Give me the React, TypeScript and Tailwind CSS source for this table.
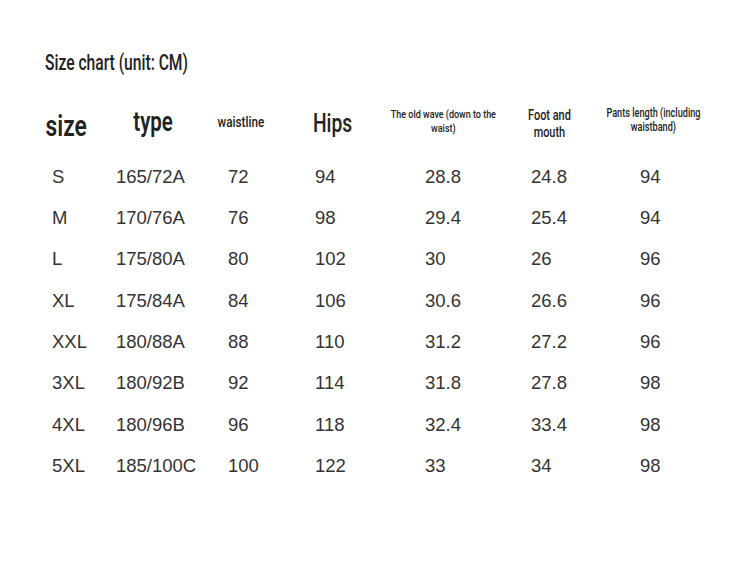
import React from 'react';

const rows = [
  ['S', '165/72A', '72', '94', '28.8', '24.8', '94'],
  ['M', '170/76A', '76', '98', '29.4', '25.4', '94'],
  ['L', '175/80A', '80', '102', '30', '26', '96'],
  ['XL', '175/84A', '84', '106', '30.6', '26.6', '96'],
  ['XXL', '180/88A', '88', '110', '31.2', '27.2', '96'],
  ['3XL', '180/92B', '92', '114', '31.8', '27.8', '98'],
  ['4XL', '180/96B', '96', '118', '32.4', '33.4', '98'],
  ['5XL', '185/100C', '100', '122', '33', '34', '98'],
];

// left padding of the data in each column
const cellPad = ['pl-[16px]', 'pl-[20px]', 'pl-[18px]', 'pl-[43px]', 'pl-[31px]', 'pl-[39px]', 'pl-[34px]'];

// no condensed face is installed, so Roboto is squeezed horizontally
const cond = { fontFamily: 'Roboto, "Liberation Sans", sans-serif' };

const App: React.FC = () => {
  return (
    <div className="w-[750px] h-[563px] bg-white overflow-hidden">
      <div className="pl-[45px] pt-[52px] h-[100px]">
        <div
          className="inline-block origin-left scale-x-[0.71] text-[22px] leading-none font-medium text-[#222] whitespace-nowrap"
          style={cond}
        >
          Size chart (unit: CM)
        </div>
      </div>

      <div className="ml-[36px] grid grid-cols-[60px_114px_62px_122px_98px_114px_94px]">
        {/* header row */}
        <div className="h-[56px] flex items-start justify-center text-[#222]" style={cond}>
          <span className="mt-[11px] inline-block scale-x-[0.76] text-[30px] leading-none font-semibold whitespace-nowrap">
            size
          </span>
        </div>
        <div className="h-[56px] flex items-start justify-center text-[#222]" style={cond}>
          <span className="mt-[8px] inline-block scale-x-[0.73] text-[28px] leading-none font-semibold whitespace-nowrap">
            type
          </span>
        </div>
        <div className="h-[56px] flex items-start justify-center text-[#222]" style={cond}>
          <span className="mt-[15.5px] inline-block scale-x-[0.81] text-[14.5px] leading-none font-medium whitespace-nowrap">
            waistline
          </span>
        </div>
        <div className="h-[56px] flex items-start justify-center text-[#222]" style={cond}>
          <span className="mt-[10px] inline-block scale-x-[0.74] text-[26px] leading-none font-medium whitespace-nowrap">
            Hips
          </span>
        </div>
        <div className="h-[56px] flex items-start justify-center text-[#222]" style={cond}>
          <span className="mt-[6.5px] inline-block scale-x-[0.78] text-[11.5px] leading-[14px] font-medium text-center whitespace-nowrap">
            The old wave (down to the
            <br />
            waist)
          </span>
        </div>
        <div className="h-[56px] flex items-start justify-center text-[#222]" style={cond}>
          <span className="mt-[6.5px] inline-block scale-x-[0.78] text-[14px] leading-[17.5px] font-medium text-center whitespace-nowrap">
            Foot and
            <br />
            mouth
          </span>
        </div>
        <div className="h-[56px] flex items-start justify-center text-[#222]" style={cond}>
          <span className="mt-[6px] inline-block scale-x-[0.73] text-[12.5px] leading-[14px] font-medium text-center whitespace-nowrap">
            Pants length (including
            <br />
            waistband)
          </span>
        </div>

        {/* data rows */}
        {rows.map((r) =>
          r.map((v, i) => (
            <div
              key={r[0] + i}
              className={`h-[41.3px] flex items-center text-[18.5px] text-[#333] whitespace-nowrap ${cellPad[i]}`}
              style={{ fontFamily: '"Liberation Sans", Arial, sans-serif' }}
            >
              {v}
            </div>
          ))
        )}
      </div>
    </div>
  );
};

export default App;
